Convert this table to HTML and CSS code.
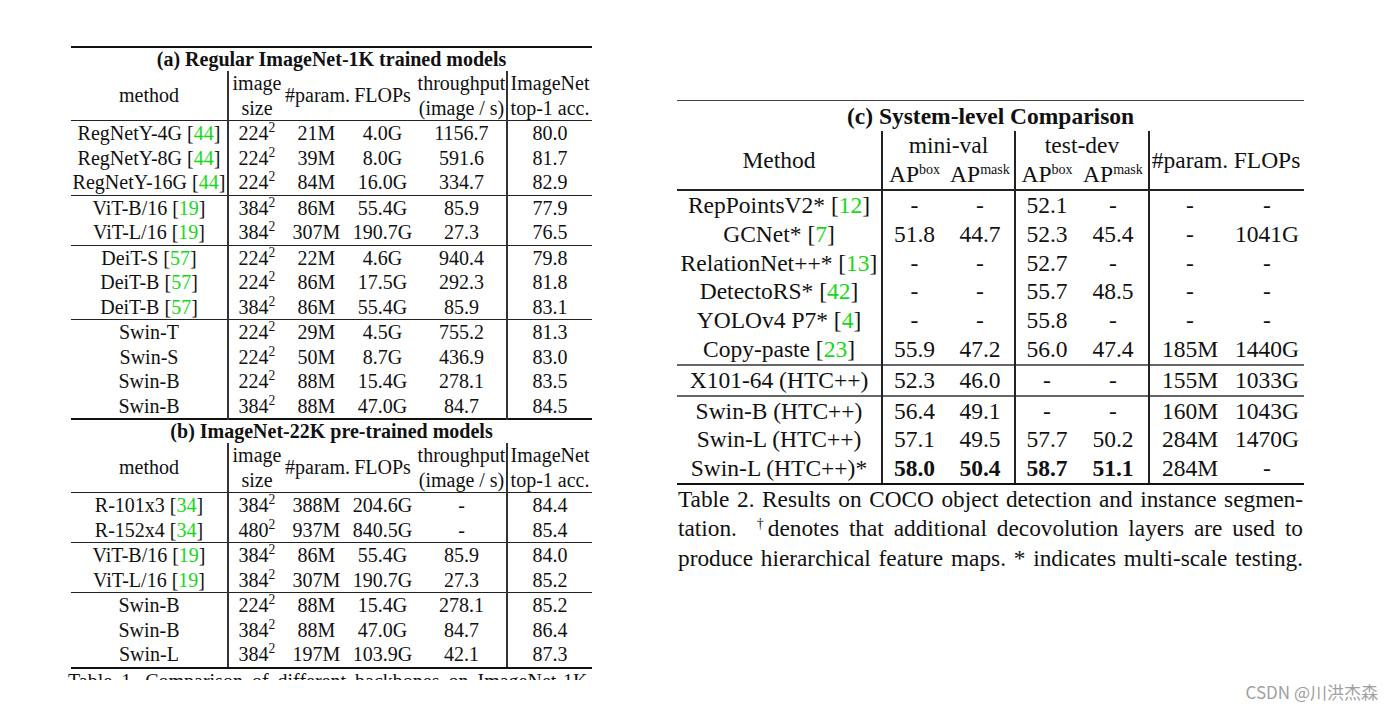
FILE: index.html
```html
<!DOCTYPE html>
<html>
<head>
<meta charset="utf-8">
<link rel="stylesheet" href="styles.css">
</head>
<body>
<div class="page">
  <div class="left">
    <table class="ta">
      <colgroup><col class="c1"><col class="c2"><col class="c3"><col class="c4"><col class="c5"><col class="c6"></colgroup>
      <tr class="ttl"><th colspan="6">(a) Regular ImageNet-1K trained models</th></tr>
      <tr class="hd"><td>method</td><td class="v">image<br>size</td><td>#param.</td><td>FLOPs</td><td>throughput<br>(image / s)</td><td class="v">ImageNet<br>top-1 acc.</td></tr>
      <tr class="g"><td>RegNetY-4G [<span class="ref">44</span>]</td><td class="v">224<sup>2</sup></td><td>21M</td><td>4.0G</td><td>1156.7</td><td class="v">80.0</td></tr>
      <tr><td>RegNetY-8G [<span class="ref">44</span>]</td><td class="v">224<sup>2</sup></td><td>39M</td><td>8.0G</td><td>591.6</td><td class="v">81.7</td></tr>
      <tr><td>RegNetY-16G [<span class="ref">44</span>]</td><td class="v">224<sup>2</sup></td><td>84M</td><td>16.0G</td><td>334.7</td><td class="v">82.9</td></tr>
      <tr class="g"><td>ViT-B/16 [<span class="ref">19</span>]</td><td class="v">384<sup>2</sup></td><td>86M</td><td>55.4G</td><td>85.9</td><td class="v">77.9</td></tr>
      <tr><td>ViT-L/16 [<span class="ref">19</span>]</td><td class="v">384<sup>2</sup></td><td>307M</td><td>190.7G</td><td>27.3</td><td class="v">76.5</td></tr>
      <tr class="g"><td>DeiT-S [<span class="ref">57</span>]</td><td class="v">224<sup>2</sup></td><td>22M</td><td>4.6G</td><td>940.4</td><td class="v">79.8</td></tr>
      <tr><td>DeiT-B [<span class="ref">57</span>]</td><td class="v">224<sup>2</sup></td><td>86M</td><td>17.5G</td><td>292.3</td><td class="v">81.8</td></tr>
      <tr><td>DeiT-B [<span class="ref">57</span>]</td><td class="v">384<sup>2</sup></td><td>86M</td><td>55.4G</td><td>85.9</td><td class="v">83.1</td></tr>
      <tr class="g"><td>Swin-T</td><td class="v">224<sup>2</sup></td><td>29M</td><td>4.5G</td><td>755.2</td><td class="v">81.3</td></tr>
      <tr><td>Swin-S</td><td class="v">224<sup>2</sup></td><td>50M</td><td>8.7G</td><td>436.9</td><td class="v">83.0</td></tr>
      <tr><td>Swin-B</td><td class="v">224<sup>2</sup></td><td>88M</td><td>15.4G</td><td>278.1</td><td class="v">83.5</td></tr>
      <tr><td>Swin-B</td><td class="v">384<sup>2</sup></td><td>88M</td><td>47.0G</td><td>84.7</td><td class="v">84.5</td></tr>
      <tr class="ttl thick"><th colspan="6">(b) ImageNet-22K pre-trained models</th></tr>
      <tr class="hd"><td>method</td><td class="v">image<br>size</td><td>#param.</td><td>FLOPs</td><td>throughput<br>(image / s)</td><td class="v">ImageNet<br>top-1 acc.</td></tr>
      <tr class="g"><td>R-101x3 [<span class="ref">34</span>]</td><td class="v">384<sup>2</sup></td><td>388M</td><td>204.6G</td><td>-</td><td class="v">84.4</td></tr>
      <tr><td>R-152x4 [<span class="ref">34</span>]</td><td class="v">480<sup>2</sup></td><td>937M</td><td>840.5G</td><td>-</td><td class="v">85.4</td></tr>
      <tr class="g"><td>ViT-B/16 [<span class="ref">19</span>]</td><td class="v">384<sup>2</sup></td><td>86M</td><td>55.4G</td><td>85.9</td><td class="v">84.0</td></tr>
      <tr><td>ViT-L/16 [<span class="ref">19</span>]</td><td class="v">384<sup>2</sup></td><td>307M</td><td>190.7G</td><td>27.3</td><td class="v">85.2</td></tr>
      <tr class="g"><td>Swin-B</td><td class="v">224<sup>2</sup></td><td>88M</td><td>15.4G</td><td>278.1</td><td class="v">85.2</td></tr>
      <tr><td>Swin-B</td><td class="v">384<sup>2</sup></td><td>88M</td><td>47.0G</td><td>84.7</td><td class="v">86.4</td></tr>
      <tr class="last"><td>Swin-L</td><td class="v">384<sup>2</sup></td><td>197M</td><td>103.9G</td><td>42.1</td><td class="v">87.3</td></tr>
    </table>
    <div class="capclip"><p class="cap1">Table 1. Comparison of different backbones on ImageNet-1K classification.</p></div>
  </div>

  <div class="right">
    <table class="tc">
      <colgroup><col class="d1"><col class="d2"><col class="d3"><col class="d4"><col class="d5"><col class="d6"><col class="d7"></colgroup>
      <tr class="ttl"><th colspan="7">(c) System-level Comparison</th></tr>
      <tr class="h1"><td rowspan="2">Method</td><td colspan="2" class="v">mini-val</td><td colspan="2" class="v">test-dev</td><td rowspan="2" class="v">#param.</td><td rowspan="2">FLOPs</td></tr>
      <tr class="h2"><td class="v">AP<sup>box</sup></td><td>AP<sup>mask</sup></td><td class="v">AP<sup>box</sup></td><td>AP<sup>mask</sup></td></tr>
      <tr class="g"><td>RepPointsV2* [<span class="ref">12</span>]</td><td class="v">-</td><td>-</td><td class="v">52.1</td><td>-</td><td class="v">-</td><td>-</td></tr>
      <tr><td>GCNet* [<span class="ref">7</span>]</td><td class="v">51.8</td><td>44.7</td><td class="v">52.3</td><td>45.4</td><td class="v">-</td><td>1041G</td></tr>
      <tr><td>RelationNet++* [<span class="ref">13</span>]</td><td class="v">-</td><td>-</td><td class="v">52.7</td><td>-</td><td class="v">-</td><td>-</td></tr>
      <tr><td>DetectoRS* [<span class="ref">42</span>]</td><td class="v">-</td><td>-</td><td class="v">55.7</td><td>48.5</td><td class="v">-</td><td>-</td></tr>
      <tr><td>YOLOv4 P7* [<span class="ref">4</span>]</td><td class="v">-</td><td>-</td><td class="v">55.8</td><td>-</td><td class="v">-</td><td>-</td></tr>
      <tr><td>Copy-paste [<span class="ref">23</span>]</td><td class="v">55.9</td><td>47.2</td><td class="v">56.0</td><td>47.4</td><td class="v">185M</td><td>1440G</td></tr>
      <tr class="dbl"><td>X101-64 (HTC++)</td><td class="v">52.3</td><td>46.0</td><td class="v">-</td><td>-</td><td class="v">155M</td><td>1033G</td></tr>
      <tr class="dbl"><td>Swin-B (HTC++)</td><td class="v">56.4</td><td>49.1</td><td class="v">-</td><td>-</td><td class="v">160M</td><td>1043G</td></tr>
      <tr><td>Swin-L (HTC++)</td><td class="v">57.1</td><td>49.5</td><td class="v">57.7</td><td>50.2</td><td class="v">284M</td><td>1470G</td></tr>
      <tr class="last"><td>Swin-L (HTC++)*</td><td class="v"><b>58.0</b></td><td><b>50.4</b></td><td class="v"><b>58.7</b></td><td><b>51.1</b></td><td class="v">284M</td><td>-</td></tr>
    </table>
    <div class="cap2">
      <p>Table 2. Results on COCO object detection and instance segmen-</p>
      <p>tation. &nbsp;<sup>†</sup>denotes that additional decovolution layers are used to</p>
      <p>produce hierarchical feature maps. * indicates multi-scale testing.</p>
    </div>
  </div>
</div>
<div class="wm">CSDN @川洪杰森</div>
</body>
</html>
```

FILE: styles.css
```css
html, body {
  margin: 0;
  padding: 0;
  background: #ffffff;
}
body {
  width: 1394px;
  height: 712px;
  position: relative;
  overflow: hidden;
  font-family: "Liberation Serif", "Times New Roman", serif;
  color: #111;
}
.page {
  display: flex;
  align-items: flex-start;
  padding: 46px 0 0 71px;
  gap: 85px;
}
.left {
  width: 521px;
}
.ta, .tc {
  border-collapse: collapse;
  table-layout: fixed;
}
.ta {
  width: 521px;
  font-size: 20px;
  border-top: 2px solid #111;
}
.ta td, .ta th {
  padding: 0;
  text-align: center;
  vertical-align: middle;
  white-space: nowrap;
  line-height: 24.5px;
}
.ta .c1 { width: 157px; }
.ta .c2 { width: 57px; }
.ta .c3 { width: 63px; }
.ta .c4 { width: 69px; }
.ta .c5 { width: 90px; }
.ta .c6 { width: 85px; }
.ta .ttl th {
  font-weight: bold;
  line-height: 23px;
}
.ta .thick th {
  border-top: 2px solid #111;
}
.ta .hd td {
  border-bottom: 1px solid #222;
}
.ta .g td {
  border-top: 1px solid #222;
}
.ta .last td {
  border-bottom: 2px solid #111;
}
.ta td.v {
  border-left: 2px solid #333;
}
sup {
  font-size: 0.68em;
  line-height: 0;
  vertical-align: 0.6em;
}
.ref {
  color: #16d816;
}
.capclip {
  height: 9px;
  overflow: hidden;
  margin-left: -3px;
  margin-top: 2px;
}
.cap1 {
  margin: 0;
  font-size: 20px;
  line-height: 20px;
  white-space: nowrap;
  word-spacing: 4px;
}

.right {
  width: 627px;
  margin-top: 54px;
}
.tc {
  width: 627px;
  font-size: 23.5px;
  border-top: 1px solid #444;
}
.tc .d1 { width: 205px; }
.tc .d2 { width: 64px; }
.tc .d3 { width: 69px; }
.tc .d4 { width: 63px; }
.tc .d5 { width: 71px; }
.tc .d6 { width: 81px; }
.tc .d7 { width: 74px; }
.tc td, .tc th {
  padding: 0;
  text-align: center;
  vertical-align: middle;
  white-space: nowrap;
  line-height: 28.8px;
}
.tc .ttl th {
  font-weight: bold;
  line-height: 30px;
}
.tc .h1 td { line-height: 29px; }
.tc .h2 td { line-height: 29px; }
.tc .h2 td, .tc .h1 td[rowspan] {
  border-bottom: 2px solid #222;
}
.tc td.v {
  border-left: 2px solid #222;
}
.tc sup {
  font-size: 0.6em;
  vertical-align: 0.6em;
}
.tc .dbl td {
  border-top: 2px solid #666;
}
.tc .last td {
  border-bottom: 2px solid #111;
}
.cap2 {
  width: 625px;
  margin-left: 1px;
  font-size: 23.3px;
  line-height: 29.5px;
}
.cap2 p {
  margin: 0;
  text-align: justify;
  text-align-last: justify;
  white-space: nowrap;
}
.cap2 sup {
  font-size: 0.6em;
  vertical-align: 0.6em;
}

.wm {
  position: absolute;
  right: 16px;
  bottom: 9px;
  font-family: "Noto Sans CJK SC", "Noto Sans", sans-serif;
  font-size: 17px;
  color: #a0a0a0;
  line-height: 22px;
}
```
